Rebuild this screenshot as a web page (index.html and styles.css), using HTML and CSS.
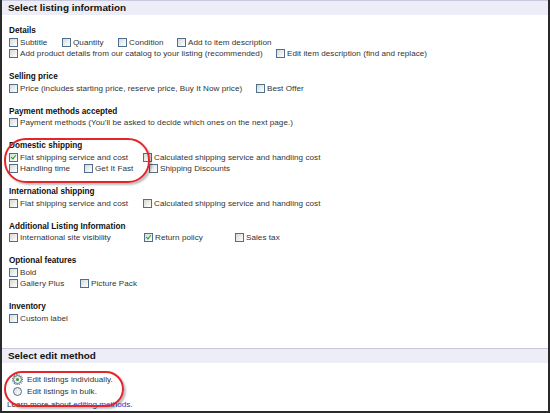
FILE: index.html
```html
<!DOCTYPE html>
<html lang="en">
<head>
<meta charset="utf-8">
<title>Edit listings</title>
<link rel="stylesheet" href="styles.css">
</head>
<body>
<div class="frame">
  <div class="band"><h2>Select listing information</h2></div>
  <div class="fields">
    <section class="grp">
      <h3>Details</h3>
      <div class="row">
        <label class="opt w53"><span class="cb"></span>Subtitle</label>
        <label class="opt w56"><span class="cb"></span>Quantity</label>
        <label class="opt w59"><span class="cb"></span>Condition</label>
        <label class="opt"><span class="cb"></span>Add to item description</label>
      </div>
      <div class="row">
        <label class="opt w267"><span class="cb"></span>Add product details from our catalog to your listing (recommended)</label>
        <label class="opt"><span class="cb"></span>Edit item description (find and replace)</label>
      </div>
    </section>
    <section class="grp">
      <h3>Selling price</h3>
      <div class="row">
        <label class="opt w247"><span class="cb"></span>Price (includes starting price, reserve price, Buy It Now price)</label>
        <label class="opt"><span class="cb"></span>Best Offer</label>
      </div>
    </section>
    <section class="grp">
      <h3>Payment methods accepted</h3>
      <div class="row">
        <label class="opt"><span class="cb"></span>Payment methods (You'll be asked to decide which ones on the next page.)</label>
      </div>
    </section>
    <section class="grp">
      <h3>Domestic shipping</h3>
      <div class="row">
        <label class="opt w134"><span class="cb on"></span>Flat shipping service and cost</label>
        <label class="opt"><span class="cb"></span>Calculated shipping service and handling cost</label>
      </div>
      <div class="row">
        <label class="opt w75"><span class="cb"></span>Handling time</label>
        <label class="opt w65"><span class="cb"></span>Get It Fast</label>
        <label class="opt"><span class="cb"></span>Shipping Discounts</label>
      </div>
    </section>
    <section class="grp">
      <h3>International shipping</h3>
      <div class="row">
        <label class="opt w134"><span class="cb"></span>Flat shipping service and cost</label>
        <label class="opt"><span class="cb"></span>Calculated shipping service and handling cost</label>
      </div>
    </section>
    <section class="grp">
      <h3>Additional Listing Information</h3>
      <div class="row">
        <label class="opt w135"><span class="cb"></span>International site visibility</label>
        <label class="opt w91"><span class="cb on"></span>Return policy</label>
        <label class="opt"><span class="cb"></span>Sales tax</label>
      </div>
    </section>
    <section class="grp">
      <h3>Optional features</h3>
      <div class="row">
        <label class="opt"><span class="cb"></span>Bold</label>
      </div>
      <div class="row">
        <label class="opt w71"><span class="cb"></span>Gallery Plus</label>
        <label class="opt"><span class="cb"></span>Picture Pack</label>
      </div>
    </section>
    <section class="grp">
      <h3>Inventory</h3>
      <div class="row">
        <label class="opt"><span class="cb"></span>Custom label</label>
      </div>
    </section>
  </div>
  <div class="band band-edit"><h2>Select edit method</h2></div>
  <div class="methods">
    <label class="opt radio-row"><span class="rd on"></span>Edit listings individually.</label>
    <label class="opt radio-row"><span class="rd"></span>Edit listings in bulk.</label>
    <p class="learn">Learn more about <a href="#">editing methods</a>.</p>
  </div>
  <div class="ring ring-ship"></div>
  <div class="ring ring-edit"></div>
</div>
</body>
</html>
```
FILE: styles.css
```css
html, body {
  margin: 0;
  padding: 0;
  background: #fff;
}

.frame {
  position: relative;
  box-sizing: border-box;
  width: 550px;
  height: 413px;
  border-left: 2px solid #2a2a2a;
  border-right: 2px solid #2a2a2a;
  border-bottom: 2px solid #2a2a2a;
  overflow: hidden;
  font-family: "Liberation Sans", Arial, sans-serif;
  color: #333;
}

/* section title bars */
.band {
  height: 15px;
  box-sizing: border-box;
  background: #ededf7;
  border-top: 1px solid #c8c8de;
  padding-left: 6px;
}

.band h2 {
  margin: 0;
  font-size: 9.9px;
  line-height: 14px;
  font-weight: bold;
  color: #111;
}

.band-edit {
  margin-top: 24px;
}

.fields {
  padding: 10px 0 0 7px;
}

.grp {
  margin-bottom: 11.5px;
}

.grp:last-child {
  margin-bottom: 0;
}

.grp h3 {
  margin: 0;
  font-size: 8.2px;
  line-height: 11.5px;
  font-weight: bold;
  color: #111;
}

.row {
  display: flex;
  height: 11.5px;
  line-height: 11.5px;
}

.opt {
  display: flex;
  align-items: center;
  font-size: 8.1px;
  letter-spacing: 0.05px;
  white-space: nowrap;
  flex: none;
}

.w53 { width: 53px; }
.w56 { width: 56px; }
.w59 { width: 59px; }
.w65 { width: 65px; }
.w71 { width: 71px; }
.w75 { width: 75px; }
.w91 { width: 91px; }
.w134 { width: 134px; }
.w135 { width: 135px; }
.w247 { width: 247px; }
.w267 { width: 267px; }

/* checkbox */
.cb {
  position: relative;
  box-sizing: border-box;
  width: 9px;
  height: 9px;
  margin-right: 2px;
  border: 1px solid #4f6f8f;
  background: linear-gradient(135deg, #d8d8d4 0%, #f4f4f2 70%, #fff 100%);
  flex: none;
}

.cb.on::after {
  content: "";
  position: absolute;
  left: 2px;
  top: 0px;
  width: 2px;
  height: 4px;
  border: solid #22a022;
  border-width: 0 1.5px 1.5px 0;
  transform: rotate(40deg);
}

/* edit method */
.methods {
  padding: 10px 0 0 5px;
}

.radio-row {
  height: 12px;
  padding-left: 6px;
}

.rd {
  position: relative;
  box-sizing: border-box;
  width: 9px;
  height: 9px;
  border-radius: 50%;
  border: 1px solid #4f6f8f;
  background: linear-gradient(135deg, #dcdcd8, #fff);
  margin-right: 5px;
  flex: none;
}

.rd.on {
  outline: 1px dotted #555;
  outline-offset: 0;
}

.rd.on::after {
  content: "";
  position: absolute;
  left: 2px;
  top: 2px;
  width: 3px;
  height: 3px;
  border-radius: 50%;
  background: #2aa02a;
}

.learn {
  margin: 2px 0 0;
  font-size: 8.1px;
  line-height: 12px;
}

.learn a {
  color: #3030c8;
  text-decoration: none;
}

/* red annotation rings */
.ring {
  position: absolute;
  border: 2px solid #e3262b;
  border-radius: 22px;
  box-shadow: 2px 2px 2px rgba(0, 0, 0, 0.25);
  pointer-events: none;
}

.ring-ship {
  left: 2px;
  top: 138px;
  width: 142px;
  height: 41px;
}

.ring-edit {
  left: 2px;
  top: 371px;
  width: 116px;
  height: 32px;
  border-radius: 18px;
}
```
